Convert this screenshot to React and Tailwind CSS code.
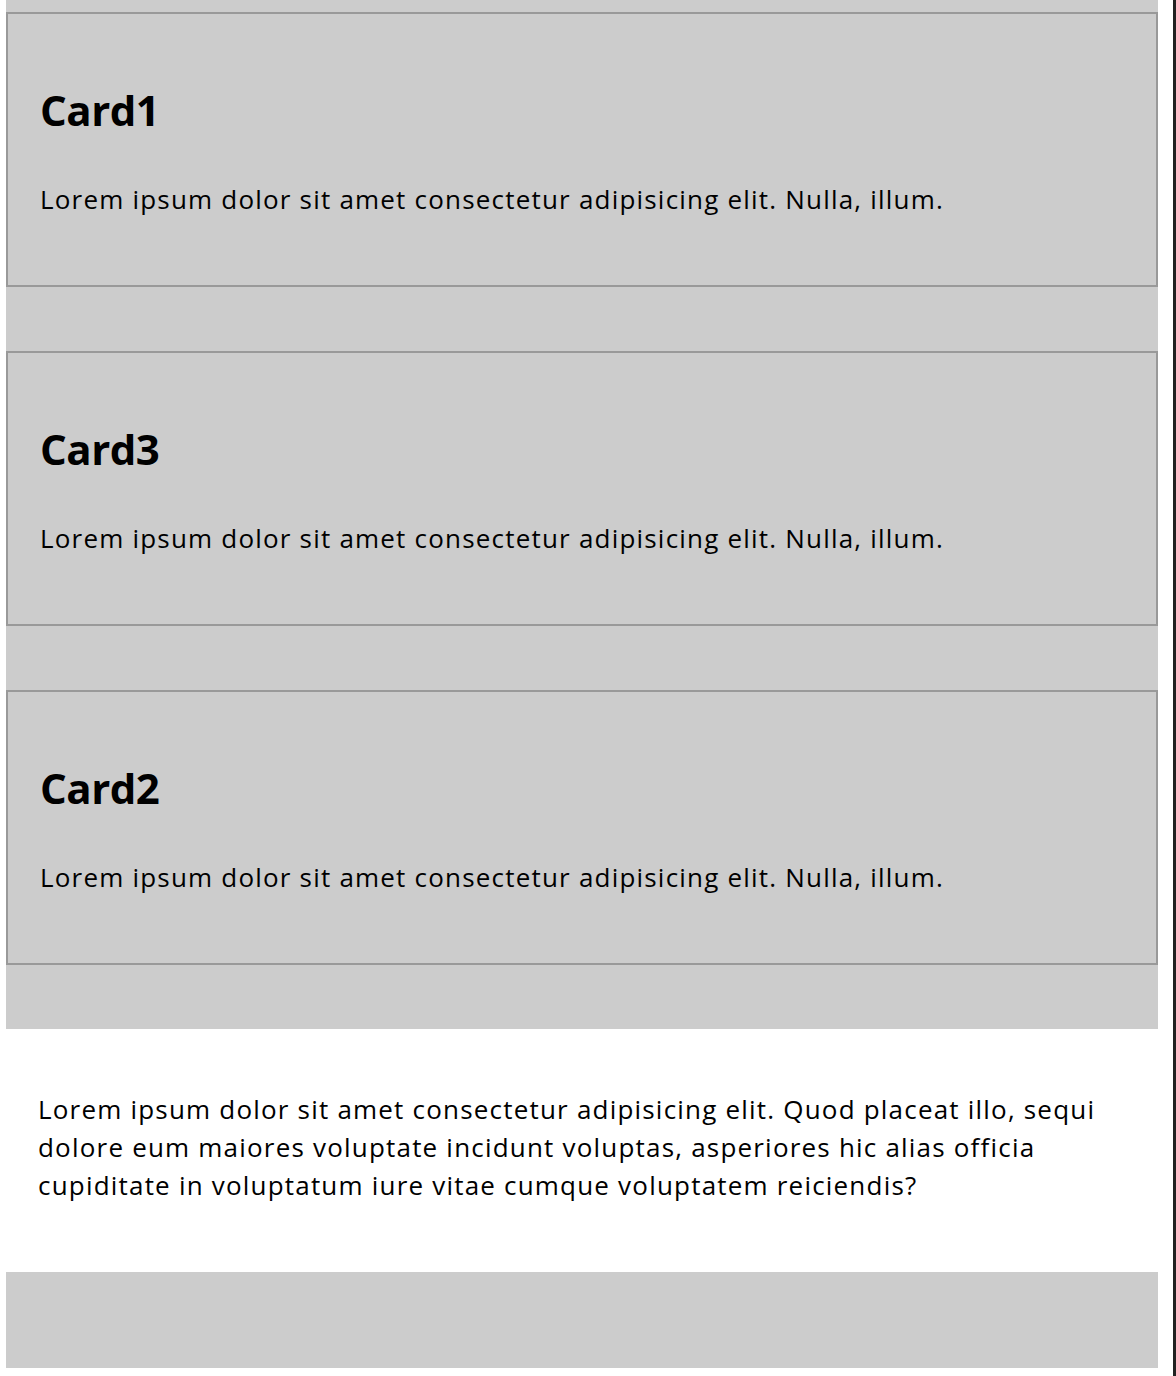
const FONT = { fontFamily: '"Open Sans", "Noto Sans CJK KR", sans-serif' }

const CARDS = ['Card1', 'Card3', 'Card2']

function Card({ title }) {
  return (
    <div className="h-[275px] border-2 border-[#999] px-[32px] pt-[73px]">
      <h2 className="text-[42px] leading-[46px] font-bold tracking-[-0.5px] text-black">{title}</h2>
      <p className="mt-[47px] text-[26px] leading-[38px] tracking-[1.2px] text-black">
        Lorem ipsum dolor sit amet consectetur adipisicing elit. Nulla, illum.
      </p>
    </div>
  )
}

export default function App() {
  return (
    <div className="flex bg-white" style={FONT}>
      <main className="flex-1 pb-[8px]">
        <section className="ml-[6px] w-[1152px] bg-[#ccc] pt-3 pb-16 flex flex-col gap-16">
          {CARDS.map(t => <Card key={t} title={t} />)}
        </section>
        <div className="ml-[6px] w-[1152px] px-[32px] pt-[61px] pb-[68px]">
          <p className="text-[26px] leading-[38px] tracking-[1.2px] text-black">
            Lorem ipsum dolor sit amet consectetur adipisicing elit. Quod placeat illo, sequi dolore eum maiores voluptate incidunt voluptas, asperiores hic alias officia cupiditate in voluptatum iure vitae cumque voluptatem reiciendis?
          </p>
        </div>
        <div className="ml-[6px] w-[1152px] h-[96px] bg-[#ccc]" />
      </main>
      <aside className="w-[3px] shrink-0 bg-[#222]" />
    </div>
  )
}
